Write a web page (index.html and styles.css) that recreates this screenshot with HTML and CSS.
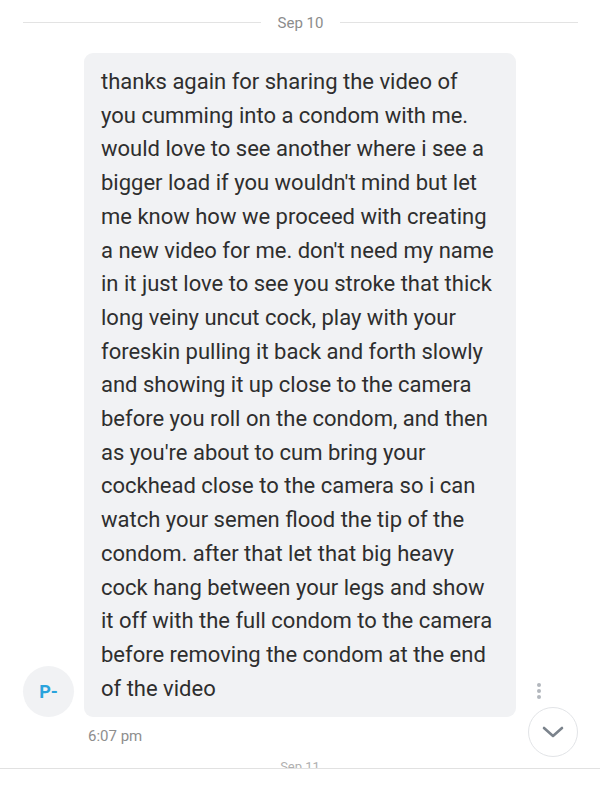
FILE: index.html
```html
<!DOCTYPE html>
<html lang="en">
<head>
    <meta charset="UTF-8">
    <meta name="viewport" content="width=device-width, initial-scale=1.0">
    <title>Conversation</title>
    <link rel="stylesheet" href="styles.css">
</head>
<body>
    <div class="thread">
        <div class="day-divider"><span>Sep 10</span></div>

        <div class="msg-row">
            <div class="avatar">P-</div>
            <div class="bubble">thanks again for sharing the video of you cumming into a condom with me. would love to see another where i see a bigger load if you wouldn't mind but let me know how we proceed with creating a new video for me. don't need my name in it just love to see you stroke that thick long veiny uncut cock, play with your foreskin pulling it back and forth slowly and showing it up close to the camera before you roll on the condom, and then as you're about to cum bring your cockhead close to the camera so i can watch your semen flood the tip of the condom. after that let that big heavy cock hang between your legs and show it off with the full condom to the camera before removing the condom at the end of the video</div>
            <div class="more">
                <svg width="6" height="18" viewBox="0 0 6 18"><circle cx="3" cy="3" r="2"/><circle cx="3" cy="9" r="2"/><circle cx="3" cy="15" r="2"/></svg>
            </div>
        </div>
        <div class="time">6:07 pm</div>

        <div class="next-day">Sep 11</div>
    </div>

    <button class="scroll-down">
        <svg width="22" height="14" viewBox="0 0 22 14"><path d="M2 3 L11 11 L20 3" fill="none" stroke="#7b838c" stroke-width="2.6" stroke-linecap="round" stroke-linejoin="round"/></svg>
    </button>

    <div class="composer"></div>
</body>
</html>
```

FILE: styles.css
```css
* {
    margin: 0;
    padding: 0;
    box-sizing: border-box;
    font-family: Roboto, 'Noto Sans', sans-serif;
}

body {
    background: #ffffff;
    width: 600px;
    height: 785px;
    overflow: hidden;
    position: relative;
}

.thread {
    height: 768px;
    overflow: hidden;
}

.day-divider {
    display: flex;
    align-items: center;
    gap: 17px;
    padding: 12px 22px 0 23px;
    height: 33px;
    color: #8c8c8c;
    font-size: 15px;
}

.day-divider::before,
.day-divider::after {
    content: '';
    flex: 1;
    height: 1px;
    background: #e3e3e3;
}

.msg-row {
    display: flex;
    align-items: flex-end;
    margin-top: 20px;
}

.avatar {
    width: 51px;
    height: 51px;
    border-radius: 50%;
    background: #f1f2f4;
    color: #29a3dc;
    font-weight: 700;
    font-size: 18px;
    display: flex;
    align-items: center;
    justify-content: center;
    margin-left: 23px;
    flex-shrink: 0;
}

.bubble {
    margin-left: 10px;
    width: 432px;
    background: #f1f2f4;
    border-radius: 9px;
    padding: 12px 22px 12px 17px;
    font-size: 22px;
    line-height: 33.7px;
    color: #2e2e2e;
}

.more {
    margin: 0 0 17px 20px;
    fill: #b3b7bd;
    line-height: 0;
}

.time {
    margin: 10px 0 0 88px;
    font-size: 15px;
    color: #8e8e8e;
}

.next-day {
    text-align: center;
    color: #b0b0b0;
    font-size: 13px;
    margin-top: 14px;
}

.scroll-down {
    position: absolute;
    left: 528px;
    top: 707px;
    width: 50px;
    height: 50px;
    border-radius: 50%;
    border: 1px solid #e2e4e7;
    background: #ffffff;
    display: flex;
    align-items: center;
    justify-content: center;
}

.composer {
    border-top: 1px solid #e1e1e1;
    height: 17px;
    background: #ffffff;
}
```
